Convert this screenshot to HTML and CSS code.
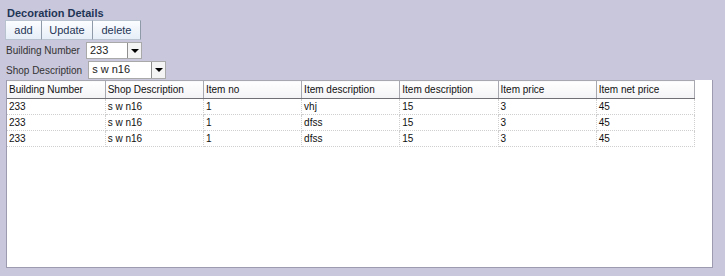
FILE: index.html
```html
<!DOCTYPE html>
<html>
<head lang="en">
<meta charset="UTF-8">
<title>Decoration Details</title>
<link rel="stylesheet" href="styles.css">
</head>
<body>
<div class="page">
    <h1 class="title">Decoration Details</h1>
    <div class="toolbar">
        <button class="btn btn-add">add</button>
        <button class="btn btn-update">Update</button>
        <button class="btn btn-delete">delete</button>
    </div>
    <div class="field">
        <label>Building Number</label>
        <div class="combo combo-short"><span class="combo-text">233</span><span class="combo-arrow"></span></div>
    </div>
    <div class="field">
        <label>Shop Description</label>
        <div class="combo combo-long"><span class="combo-text">s w n16</span><span class="combo-arrow"></span></div>
    </div>
    <div class="panel">
        <table class="grid">
            <thead>
                <tr>
                    <th>Building Number</th>
                    <th>Shop Description</th>
                    <th>Item no</th>
                    <th>Item description</th>
                    <th>Item description</th>
                    <th>Item price</th>
                    <th>Item net price</th>
                </tr>
            </thead>
            <tbody>
                <tr><td>233</td><td>s w n16</td><td>1</td><td>vhj</td><td>15</td><td>3</td><td>45</td></tr>
                <tr><td>233</td><td>s w n16</td><td>1</td><td>dfss</td><td>15</td><td>3</td><td>45</td></tr>
                <tr><td>233</td><td>s w n16</td><td>1</td><td>dfss</td><td>15</td><td>3</td><td>45</td></tr>
            </tbody>
        </table>
    </div>
</div>
</body>
</html>
```
FILE: styles.css
```css
body {
    margin: 0;
    background-color: #c9c7db;
    font-family: "Liberation Sans", Arial, sans-serif;
    font-size: 10px;
    color: #222;
}
.page {
    height: 276px;
    box-sizing: border-box;
    padding: 7px 12px 8px 6px;
    display: flex;
    flex-direction: column;
}
.title {
    margin: 0 0 0 1px;
    font-size: 11px;
    line-height: 13px;
    font-weight: bold;
    color: #1f3556;
}
.toolbar {
    display: flex;
    margin-left: -1px;
}
.btn {
    height: 20px;
    padding: 0;
    margin: 0;
    font-family: "Liberation Sans", Arial, sans-serif;
    font-size: 11px;
    color: #1f3556;
    background: linear-gradient(#fbfdff, #e6eef7);
    border: 1px solid #b9c3d0;
    border-right-color: #8f9aa8;
}
.btn + .btn {
    border-left: none;
}
.btn-add {
    width: 37px;
}
.btn-update {
    width: 51px;
}
.btn-delete {
    width: 48px;
}
.field {
    display: flex;
    align-items: center;
    gap: 6px;
    margin-top: 2px;
    height: 17px;
}
.field label {
    color: #333;
    font-size: 10px;
}
.field + .field {
    margin-top: 2px;
    height: 18px;
}
.combo {
    display: flex;
    align-items: stretch;
    height: 100%;
    box-sizing: border-box;
    background: #fff;
    border: 1px solid #a9a9a9;
}
.combo-short {
    width: 56px;
}
.combo-long {
    width: 78px;
}
.combo-text {
    flex: 1;
    padding-left: 3px;
    font-size: 11px;
    line-height: 15px;
}
.combo-arrow {
    width: 13px;
    border-left: 1px solid #8f8f8f;
    background: #f4f4f4;
    position: relative;
}
.combo-arrow::after {
    content: "";
    position: absolute;
    left: 3px;
    top: 6px;
    border-left: 4px solid transparent;
    border-right: 4px solid transparent;
    border-top: 4px solid #000;
}
.panel {
    flex: 1;
    margin-top: 1px;
    background: #fff;
    border: 1px solid #9d9bb0;
    border-top: none;
}
.grid {
    border-collapse: collapse;
    table-layout: fixed;
    width: 688px;
}
.grid th {
    height: 17px;
    padding: 0 0 0 2px;
    text-align: left;
    font-weight: normal;
    color: #111;
    background: linear-gradient(#ffffff, #f3f3f6);
    border-top: 1px solid #a8a8b0;
    border-right: 1px solid #a8a8b0;
    border-bottom: 1px solid #6f6f75;
    white-space: nowrap;
    overflow: hidden;
}
.grid td {
    height: 15px;
    padding: 0 0 0 2px;
    border-right: 1px dotted #cfcfcf;
    border-bottom: 1px dotted #cfcfcf;
    color: #111;
}
```
